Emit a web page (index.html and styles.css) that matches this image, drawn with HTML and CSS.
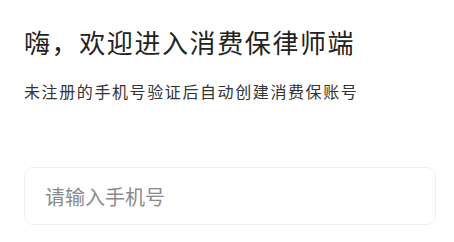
FILE: index.html
```html
<!DOCTYPE html>
<html lang="zh-CN">
<head>
<meta charset="utf-8">
<link rel="stylesheet" href="styles.css">
</head>
<body>
<main class="page">
  <h1 class="title">嗨，欢迎进入消费保律师端</h1>
  <p class="subtitle">未注册的手机号验证后自动创建消费保账号</p>
  <div class="field">
    <input class="phone" type="tel" placeholder="请输入手机号">
  </div>
</main>
</body>
</html>
```
FILE: styles.css
```css
html, body {
  margin: 0;
  padding: 0;
  background: #ffffff;
}
.page {
  padding: 26px 18px 0 24px;
  font-family: "Noto Sans CJK SC", "Noto Sans", sans-serif;
}
.title {
  margin: 0;
  font-size: 26px;
  font-weight: 400;
  line-height: 32px;
  letter-spacing: 1.6px;
  color: #222222;
}
.subtitle {
  margin: 22px 0 0 0;
  font-size: 16px;
  line-height: 22px;
  letter-spacing: 1.6px;
  color: #333333;
}
.field {
  margin-top: 65px;
  height: 56px;
  border: 1px solid #eeeeee;
  border-radius: 9px;
  display: flex;
  align-items: center;
  padding: 0 20px;
}
.phone {
  flex: 1;
  border: none;
  outline: none;
  background: transparent;
  font-family: "Noto Sans CJK SC", "Noto Sans", sans-serif;
  font-size: 20px;
  padding: 0;
  color: #333333;
}
.phone::placeholder {
  color: #8a8a8a;
}
```
